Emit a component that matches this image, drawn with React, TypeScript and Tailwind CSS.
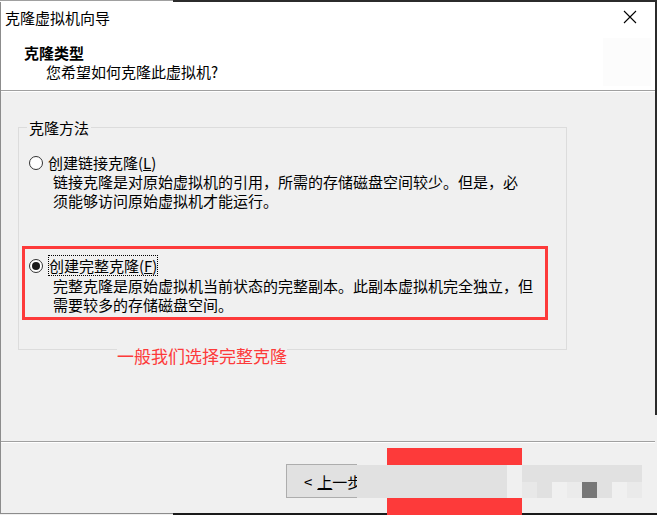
import React from "react";

const FONT = { fontFamily: '"Noto Sans CJK SC", "Noto Sans", sans-serif' };

function Radio({ checked }: { checked?: boolean }) {
  return (
    <div className="w-[14px] h-[14px] rounded-full border border-[#333333] bg-white flex items-center justify-center shrink-0">
      {checked && <div className="w-[8px] h-[8px] rounded-full bg-[#1a1a1a]" />}
    </div>
  );
}

export default function App() {
  const tiles = ["#e8e8e8", "#e1e1e1", "#f0f0f0", "#ebebeb", "#777777", "#e1e1e1", "#f0f0f0", "#eaeaea"];
  return (
    <div
      className="relative w-[657px] h-[515px] overflow-hidden bg-[#f0f0f0] text-black flex flex-col text-[15px] leading-[19px]"
      style={FONT}
    >
      {/* top frame */}
      <div className="flex h-[2px] shrink-0">
        <div className="w-[173px] border-t border-[#a0a0a0] bg-white" />
        <div className="flex-1 bg-[#2b2b2b]" />
      </div>

      <div className="flex flex-1 min-h-0">
        {/* left frame */}
        <div className="w-[1px] bg-[#8c8c8c] shrink-0" />

        <div className="flex-1 flex flex-col min-w-0">
          {/* header */}
          <div className="h-[88px] bg-white flex justify-between shrink-0">
            <div className="flex flex-col">
              <div className="h-[30px] flex items-center pl-[4px]">克隆虚拟机向导</div>
              <div className="mt-[11px] pl-[23px] font-bold">克隆类型</div>
              <div className="pl-[45px]">您希望如何克隆此虚拟机?</div>
            </div>
            <div className="flex flex-col items-end pr-[4px]">
              <div className="h-[30px] w-[30px] flex items-center justify-center mr-[6px]">
                <svg width="14" height="14" viewBox="0 0 14 14">
                  <path d="M1 1 L13 13 M13 1 L1 13" stroke="#000" strokeWidth="1.1" />
                </svg>
              </div>
              <div className="w-[48px] h-[48px] bg-[#fcfcfc] mt-[6px]" />
            </div>
          </div>
          <div className="h-[1px] bg-[#a0a0a0] shrink-0" />
          <div className="h-[1px] bg-white shrink-0" />

          {/* body */}
          <div className="h-[349px] pl-[17px] pt-[26px] shrink-0">
            <fieldset className="w-[549px] border border-[#dcdcdc] pb-[29px]">
              <legend className="ml-[8px] px-[2px]">克隆方法</legend>
              <div className="mt-[16px] pl-[10px] flex items-center gap-[5px]">
                <Radio />
                <span>
                  创建链接克隆(<span className="underline">L</span>)
                </span>
              </div>
              <div className="pl-[34px]">
                <div>链接克隆是对原始虚拟机的引用，所需的存储磁盘空间较少。但是，必</div>
                <div>须能够访问原始虚拟机才能运行。</div>
              </div>

              <div className="mt-[36px] ml-[3px] w-[526px] border-[3px] border-[#fd3a3a] pt-[6px] pb-[3px]">
                <div className="pl-[4px] flex items-center gap-[5px]">
                  <Radio checked />
                  <span className="border border-dotted border-black">
                    创建完整克隆(<span className="underline">F</span>)
                  </span>
                </div>
                <div className="pl-[28px]">
                  <div>完整克隆是原始虚拟机当前状态的完整副本。此副本虚拟机完全独立，但</div>
                  <div>需要较多的存储磁盘空间。</div>
                </div>
              </div>
            </fieldset>
          </div>

          <div className="h-[1px] bg-[#a0a0a0] shrink-0" />
          <div className="h-[1px] bg-white shrink-0" />

          {/* footer */}
          <div className="flex-1 pl-[285px] pt-[21px]">
            <div className="w-[71px] h-[34px] border-l border-t border-b border-[#adadad] bg-[#e1e1e1] flex items-center pl-[17px] whitespace-nowrap">
              &lt; <span className="underline ml-[5px]">上</span>一步
            </div>
          </div>
        </div>

        {/* right frame */}
        <div className="w-[2px] flex flex-col shrink-0">
          <div className="h-[413px] bg-[#2b2b2b]" />
        </div>
      </div>

      {/* bottom frame */}
      <div className="flex h-[2px] shrink-0">
        <div className="w-[173px] border-t border-[#8c8c8c]" />
        <div className="flex-1 bg-[#1a1a1a]" />
      </div>

      {/* annotation */}
      <div className="absolute left-[117px] top-[345px] text-[17px] leading-[22px] text-[#fd3a3a] bg-[#f0f0f0]">
        一般我们选择完整克隆
      </div>

      {/* redaction mosaic */}
      <div className="absolute left-[357px] top-[465px] w-[150px] h-[33px] bg-[#e1e1e1]" />
      <div className="absolute left-[387px] top-[448px] w-[135px] h-[17px] bg-[#fd3a3a]" />
      <div className="absolute left-[387px] top-[498px] w-[135px] h-[17px] bg-[#fd3a3a]" />
      <div className="absolute left-[522px] top-[465px] w-[120px] flex flex-col">
        <div className="h-[17px] bg-[#e1e1e1]" />
        <div className="h-[16px] flex">
          {tiles.map((c, i) => (
            <div key={i} className="w-[15px] h-[16px]" style={{ backgroundColor: c }} />
          ))}
        </div>
      </div>
    </div>
  );
}
